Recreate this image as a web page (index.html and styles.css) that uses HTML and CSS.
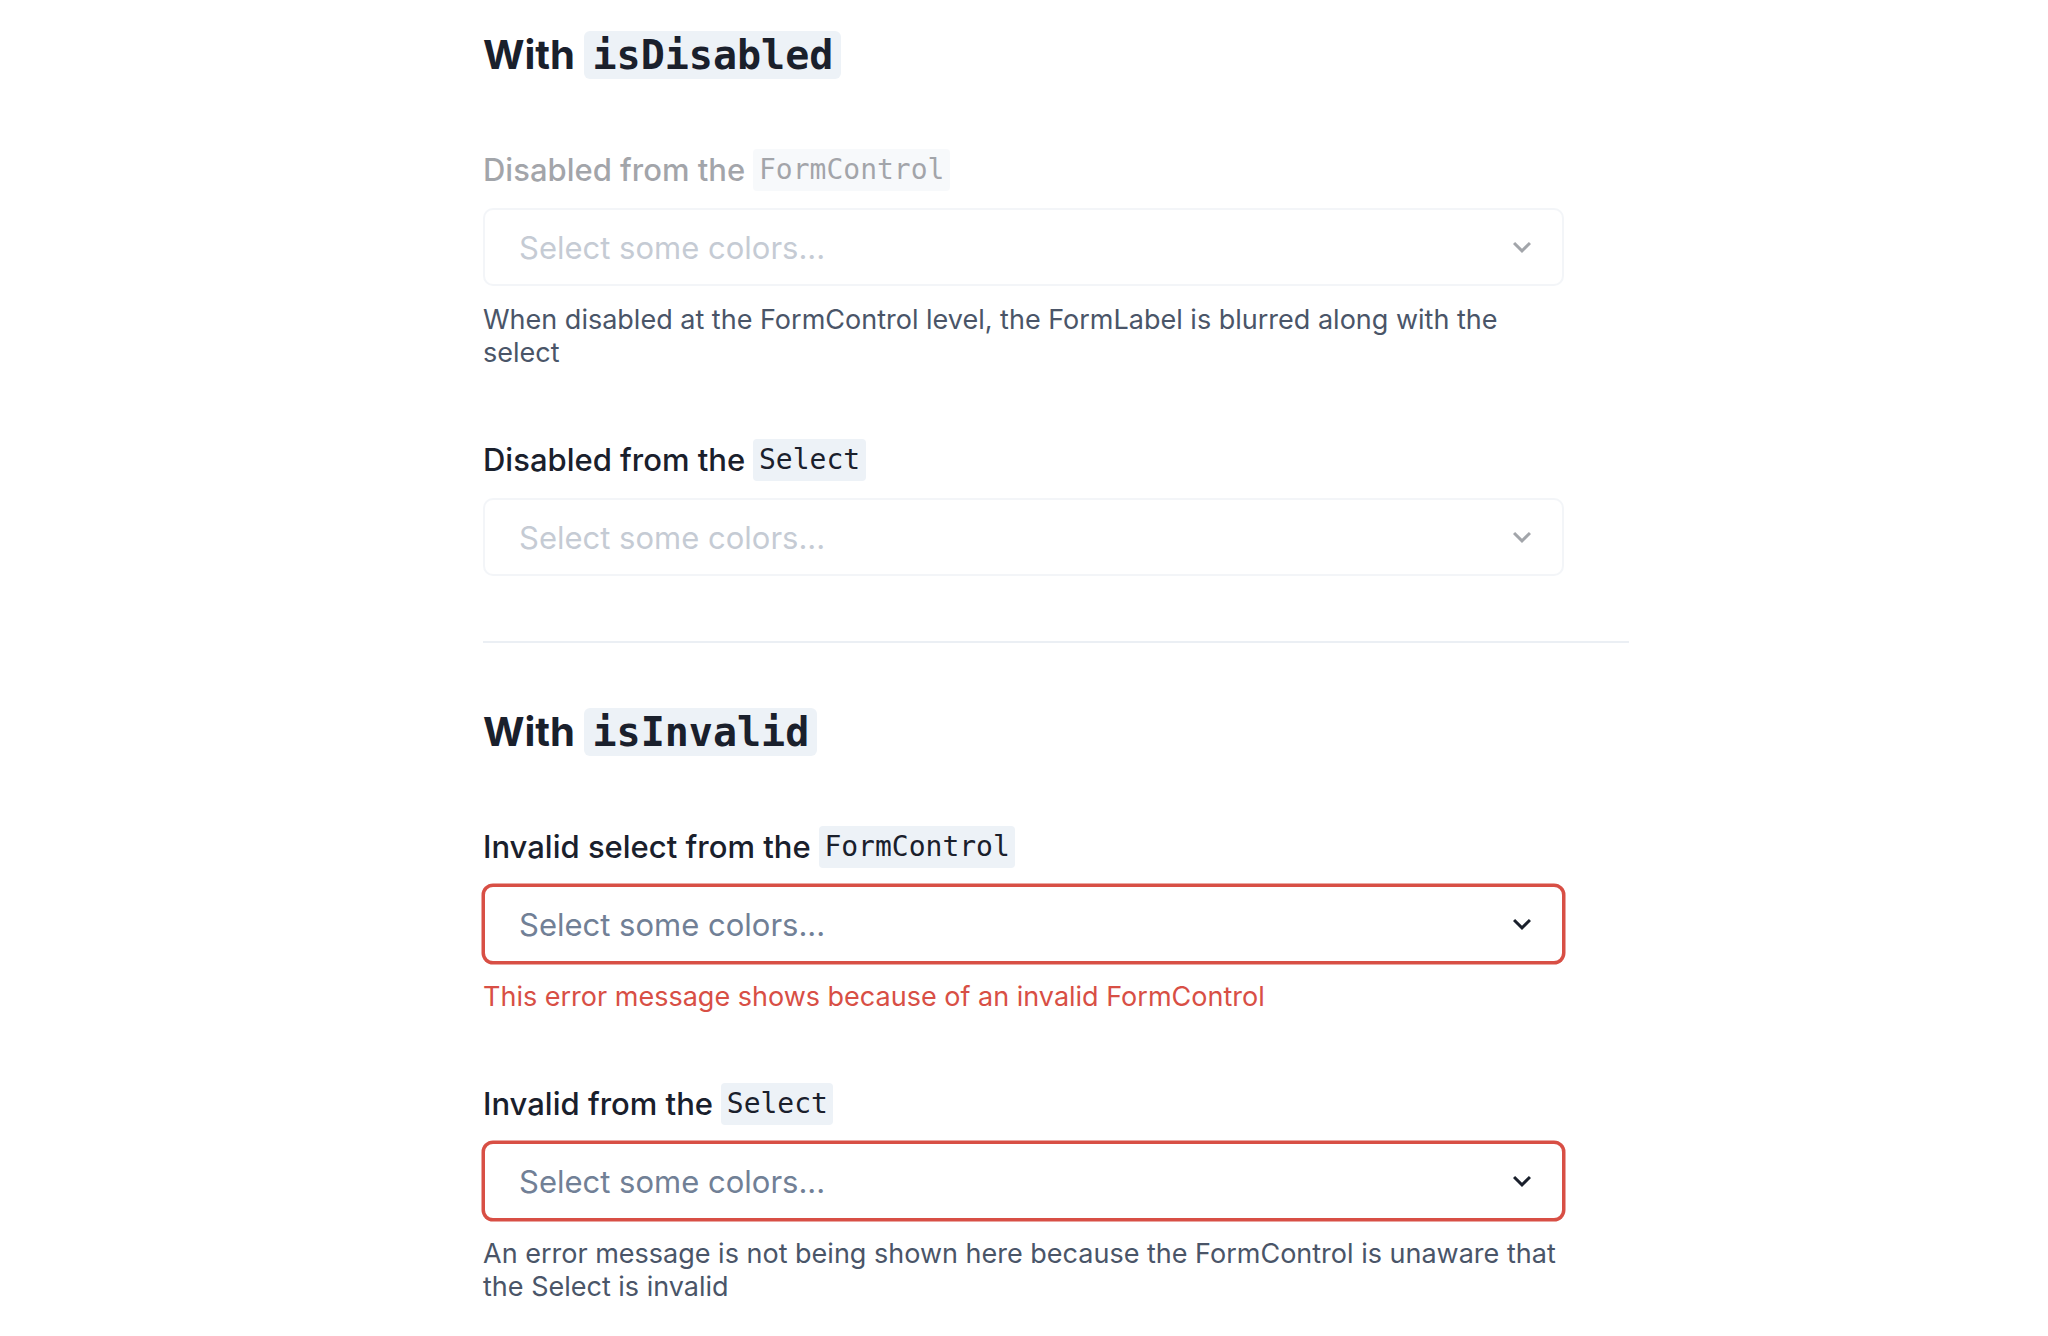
FILE: index.html
```html
<!DOCTYPE html>
<html lang="en">
<head>
<meta charset="utf-8">
<title>Select states</title>
<link rel="stylesheet" href="styles.css">
</head>
<body>
<main class="page">
  <section class="section">
    <h2 class="heading">With <code class="code code-heading">isDisabled</code></h2>

    <div class="field">
      <div class="dim">
        <label class="label">Disabled from the <code class="code">FormControl</code></label>
        <div class="select">
          <span class="placeholder">Select some colors...</span>
          <svg class="chevron" viewBox="0 0 24 24" aria-hidden="true"><path d="M16.59 8.59L12 13.17 7.41 8.59 6 10l6 6 6-6z"/></svg>
        </div>
      </div>
      <p class="helper">When disabled at the FormControl level, the FormLabel is blurred along with the select</p>
    </div>

    <div class="field">
      <label class="label">Disabled from the <code class="code">Select</code></label>
      <div class="select dim">
        <span class="placeholder">Select some colors...</span>
        <svg class="chevron" viewBox="0 0 24 24" aria-hidden="true"><path d="M16.59 8.59L12 13.17 7.41 8.59 6 10l6 6 6-6z"/></svg>
      </div>
    </div>
  </section>

  <hr class="divider">

  <section class="section">
    <h2 class="heading">With <code class="code code-heading">isInvalid</code></h2>

    <div class="field">
      <label class="label">Invalid select from the <code class="code">FormControl</code></label>
      <div class="select invalid">
        <span class="placeholder">Select some colors...</span>
        <svg class="chevron" viewBox="0 0 24 24" aria-hidden="true"><path d="M16.59 8.59L12 13.17 7.41 8.59 6 10l6 6 6-6z"/></svg>
      </div>
      <p class="helper error">This error message shows because of an invalid FormControl</p>
    </div>

    <div class="field">
      <label class="label">Invalid from the <code class="code">Select</code></label>
      <div class="select invalid">
        <span class="placeholder">Select some colors...</span>
        <svg class="chevron" viewBox="0 0 24 24" aria-hidden="true"><path d="M16.59 8.59L12 13.17 7.41 8.59 6 10l6 6 6-6z"/></svg>
      </div>
      <p class="helper">An error message is not being shown here because the FormControl is unaware that the Select is invalid</p>
    </div>
  </section>
</main>
</body>
</html>
```

FILE: styles.css
```css
* { box-sizing: border-box; }

html, body {
  margin: 0;
  padding: 0;
  background: #ffffff;
}

body {
  font-family: Inter, "Noto Sans", "Liberation Sans", sans-serif;
  color: #1a202c;
}

.page {
  width: 1146px;
  margin-left: 483px;
  padding-top: 31px;
  display: flex;
  flex-direction: column;
}

.section {
  display: flex;
  flex-direction: column;
  gap: 70px;
}

.heading {
  margin: 0;
  font-size: 40px;
  line-height: 48px;
  font-weight: 700;
  color: #1a202c;
}

.code {
  display: inline-block;
  font-family: "DejaVu Sans Mono", "Liberation Mono", monospace;
  font-size: 28px;
  font-weight: 400;
  line-height: 42px;
  padding: 0 5.5px;
  background: #edf2f7;
  border-radius: 4px;
  color: #1a202c;
  vertical-align: top;
}

.code-heading {
  font-size: 40px;
  line-height: 48px;
  font-weight: 700;
  padding: 0 8px;
  border-radius: 6px;
}

.field {
  width: 1081px;
  display: flex;
  flex-direction: column;
}

.dim { opacity: 0.4; }

.dim:not(.select) {
  display: flex;
  flex-direction: column;
}

.label {
  display: block;
  font-size: 31px;
  line-height: 42px;
  font-weight: 500;
  margin-bottom: 17px;
}

.select {
  height: 78px;
  border: 2px solid #e2e8f0;
  border-radius: 10px;
  display: flex;
  align-items: center;
  justify-content: space-between;
  padding: 0 22px 0 34px;
  background: #fff;
}

.placeholder {
  font-size: 31px;
  color: #718096;
}

.chevron {
  width: 36px;
  height: 36px;
  fill: #1a202c;
}

.select.invalid {
  border-color: #d84f45;
  box-shadow: 0 0 0 1.5px #d84f45;
}

.helper {
  margin: 17px 0 0;
  font-size: 27px;
  line-height: 33px;
  color: #4a5568;
}

.helper.error {
  color: #d84f45;
}

.divider {
  margin: 65px 0;
  border: 0;
  height: 2px;
  background: #ebeff4;
}
```
